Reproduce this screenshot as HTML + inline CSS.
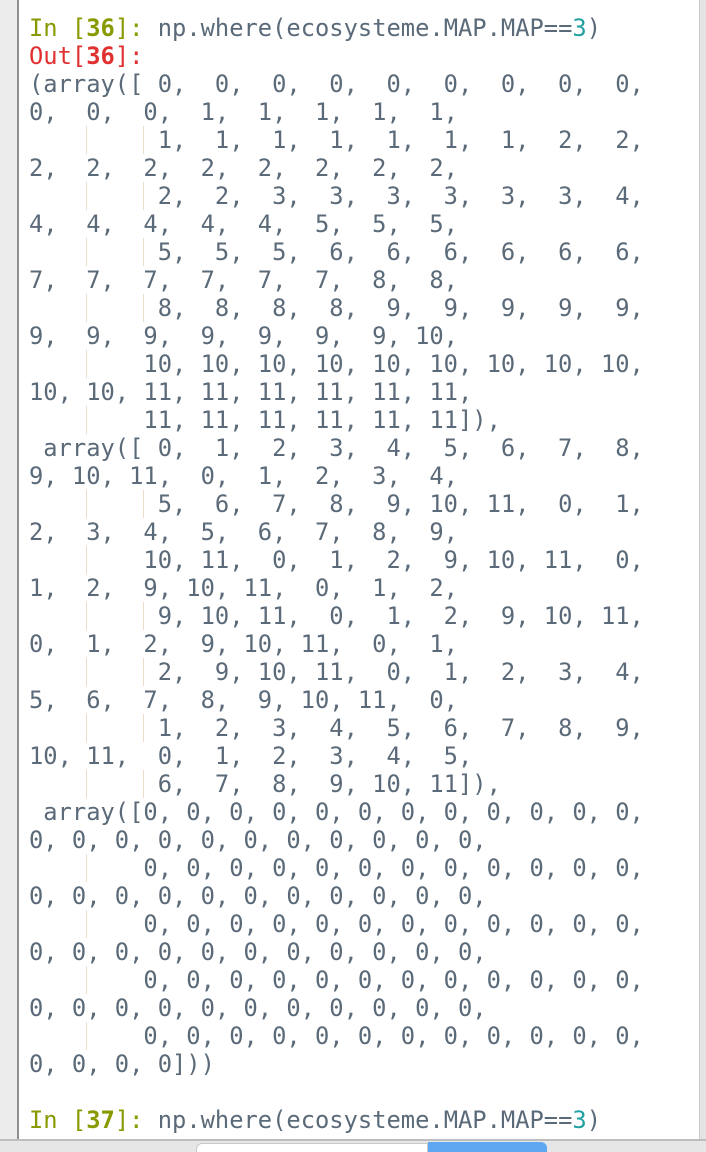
<!DOCTYPE html>
<html><head><meta charset="utf-8"><style>
html,body{margin:0;padding:0;width:706px;height:1152px;overflow:hidden;background:#fff;position:relative}
.lp{position:absolute;left:0;top:0;width:17px;height:1140px;background:#ececec}
.lb{position:absolute;left:17px;top:0;width:2px;height:1140px;background:#8e8e8e}
.rb{position:absolute;left:699px;top:0;width:7px;height:1140px;background:#e4e4e4;border-left:1px solid #ccc}
pre{position:absolute;left:29px;top:14px;margin:0;font-family:"DejaVu Sans Mono","Liberation Mono",monospace;font-size:23.75px;line-height:28px;color:#5b6a79}
.g{color:#889a00}.gb{color:#889a00;font-weight:bold}.r{color:#e03030}.rb2{color:#e03030;font-weight:bold}.t{color:#20a0a0}
i{display:inline-block;width:0;height:28px;vertical-align:top;border-left:1px solid #eadfc6;margin-right:-1px}
.bar{position:absolute;left:0;top:1139px;width:706px;height:13px;background:#e6e6e6;border-top:2px solid #bdbdbd;box-sizing:border-box}
.t1{position:absolute;left:196px;top:1143px;width:232px;height:12px;background:#fff;border:1px solid #c8c8c8;border-radius:6px 0 0 0;box-sizing:border-box}
.t2{position:absolute;left:428px;top:1142px;width:119px;height:12px;background:#5ea7f1;border-radius:0 6px 0 0}
</style></head><body>
<div class="lp"></div><div class="lb"></div><div class="rb"></div>
<pre><span class="g">In [</span><span class="gb">36</span><span class="g">]:</span> np.where(ecosysteme.MAP.MAP==<span class="t">3</span>)
<span class="r">Out[</span><span class="rb2">36</span><span class="r">]:</span>
(array([ 0,  0,  0,  0,  0,  0,  0,  0,  0,
0,  0,  0,  1,  1,  1,  1,  1,
    <i></i>    <i></i> 1,  1,  1,  1,  1,  1,  1,  2,  2,
2,  2,  2,  2,  2,  2,  2,  2,
    <i></i>    <i></i> 2,  2,  3,  3,  3,  3,  3,  3,  4,
4,  4,  4,  4,  4,  5,  5,  5,
    <i></i>    <i></i> 5,  5,  5,  6,  6,  6,  6,  6,  6,
7,  7,  7,  7,  7,  7,  8,  8,
    <i></i>    <i></i> 8,  8,  8,  8,  9,  9,  9,  9,  9,
9,  9,  9,  9,  9,  9,  9, 10,
    <i></i>    10, 10, 10, 10, 10, 10, 10, 10, 10,
10, 10, 11, 11, 11, 11, 11, 11,
    <i></i>    11, 11, 11, 11, 11, 11]),
 array([ 0,  1,  2,  3,  4,  5,  6,  7,  8,
9, 10, 11,  0,  1,  2,  3,  4,
    <i></i>    <i></i> 5,  6,  7,  8,  9, 10, 11,  0,  1,
2,  3,  4,  5,  6,  7,  8,  9,
    <i></i>    10, 11,  0,  1,  2,  9, 10, 11,  0,
1,  2,  9, 10, 11,  0,  1,  2,
    <i></i>    <i></i> 9, 10, 11,  0,  1,  2,  9, 10, 11,
0,  1,  2,  9, 10, 11,  0,  1,
    <i></i>    <i></i> 2,  9, 10, 11,  0,  1,  2,  3,  4,
5,  6,  7,  8,  9, 10, 11,  0,
    <i></i>    <i></i> 1,  2,  3,  4,  5,  6,  7,  8,  9,
10, 11,  0,  1,  2,  3,  4,  5,
    <i></i>    <i></i> 6,  7,  8,  9, 10, 11]),
 array([0, 0, 0, 0, 0, 0, 0, 0, 0, 0, 0, 0,
0, 0, 0, 0, 0, 0, 0, 0, 0, 0, 0,
    <i></i>    0, 0, 0, 0, 0, 0, 0, 0, 0, 0, 0, 0,
0, 0, 0, 0, 0, 0, 0, 0, 0, 0, 0,
    <i></i>    0, 0, 0, 0, 0, 0, 0, 0, 0, 0, 0, 0,
0, 0, 0, 0, 0, 0, 0, 0, 0, 0, 0,
    <i></i>    0, 0, 0, 0, 0, 0, 0, 0, 0, 0, 0, 0,
0, 0, 0, 0, 0, 0, 0, 0, 0, 0, 0,
    <i></i>    0, 0, 0, 0, 0, 0, 0, 0, 0, 0, 0, 0,
0, 0, 0, 0]))

<span class="g">In [</span><span class="gb">37</span><span class="g">]:</span> np.where(ecosysteme.MAP.MAP==<span class="t">3</span>)</pre>
<div class="bar"></div><div class="t1"></div><div class="t2"></div>
</body></html>
